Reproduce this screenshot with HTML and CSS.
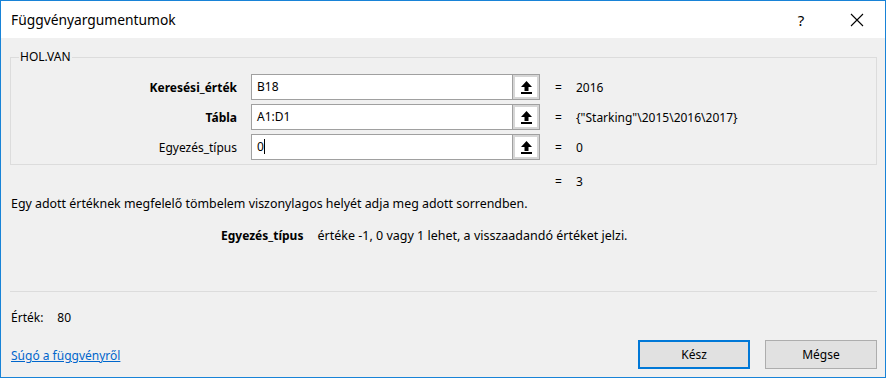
FILE: index.html
```html
<!DOCTYPE html>
<html>
<head>
<meta charset="utf-8" />
<title>Függvényargumentumok</title>
<link rel="stylesheet" href="styles.css">
</head>
<body>
<div class="dlg">
	<div class="titlebar">
		<span class="title">Függvényargumentumok</span>
		<span class="help">?</span>
		<span class="close">
			<svg width="14" height="14" viewBox="0 0 14 14"><path d="M1 1L13 13M13 1L1 13" stroke="#000" stroke-width="1.1" fill="none"/></svg>
		</span>
	</div>
	<div class="content">
		<fieldset class="group">
			<legend>HOL.VAN</legend>
			<div class="row">
				<label class="lbl bold">Keresési_érték</label>
				<div class="field">B18</div>
				<div class="pick"><i><svg width="11" height="13" viewBox="0 0 11 13"><path d="M5.5 0L11 6H7.5V10H3.5V6H0Z" fill="#000"/><rect x="0" y="11" width="11" height="2" fill="#000"/></svg></i></div>
				<span class="eq">=</span>
				<span class="val">2016</span>
			</div>
			<div class="row">
				<label class="lbl bold">Tábla</label>
				<div class="field">A1:D1</div>
				<div class="pick"><i><svg width="11" height="13" viewBox="0 0 11 13"><path d="M5.5 0L11 6H7.5V10H3.5V6H0Z" fill="#000"/><rect x="0" y="11" width="11" height="2" fill="#000"/></svg></i></div>
				<span class="eq">=</span>
				<span class="val">{"Starking"\2015\2016\2017}</span>
			</div>
			<div class="row">
				<label class="lbl">Egyezés_típus</label>
				<div class="field active">0<b class="caret"></b></div>
				<div class="pick"><i><svg width="11" height="13" viewBox="0 0 11 13"><path d="M5.5 0L11 6H7.5V10H3.5V6H0Z" fill="#000"/><rect x="0" y="11" width="11" height="2" fill="#000"/></svg></i></div>
				<span class="eq">=</span>
				<span class="val">0</span>
			</div>
		</fieldset>

		<div class="result"><span class="eq">=</span><span class="val">3</span></div>
		<p class="desc">Egy adott értéknek megfelelő tömbelem viszonylagos helyét adja meg adott sorrendben.</p>
		<p class="argdesc"><b>Egyezés_típus</b><span>értéke -1, 0 vagy 1 lehet, a visszaadandó értéket jelzi.</span></p>

		<div class="sep"></div>
		<p class="value">Érték:<span>80</span></p>

		<div class="footer">
			<a href="#" class="link">Súgó a függvényről</a>
			<div class="btns">
				<button class="btn primary">Kész</button>
				<button class="btn">Mégse</button>
			</div>
		</div>
	</div>
</div>
</body>
</html>
```

FILE: styles.css
```css
body,p,fieldset,legend{margin:0;padding:0;}
body{background:#fff;font-family:"Noto Sans","Open Sans",sans-serif;font-size:12px;color:#000;}
.dlg{width:886px;height:378px;box-sizing:border-box;border:1px solid #1883d7;background:#f0f0f0;display:flex;flex-direction:column;}
.titlebar{height:37px;background:#fff;display:flex;align-items:center;padding-left:10px;}
.title{font-size:13.8px;flex:1;}
.help{font-size:15px;width:30px;text-align:center;margin-right:34px;}
.close{width:14px;height:14px;margin-right:21px;display:flex;}
.content{flex:1;padding:0 8px 0 9px;display:flex;flex-direction:column;}

.group{border:1px solid #dcdcdc;margin-top:11px;height:114px;padding:0;}
legend{margin-left:8px;padding:0 1px;line-height:16px;}
.row{display:flex;align-items:center;height:26px;margin-bottom:4px;}
.row:first-of-type{margin-top:9px;}
.lbl{width:226px;text-align:right;margin-right:14px;}
.bold{font-weight:bold;}
.field{width:261px;height:26px;box-sizing:border-box;border:1px solid #a0a0a0;border-right:none;background:#fff;padding-left:5px;line-height:24px;position:relative;}
.caret{display:inline-block;width:1px;height:15px;background:#000;vertical-align:-3px;}
.pick{width:28px;height:26px;box-sizing:border-box;border:1px solid #a0a0a0;background:#d6d6d6;padding:2px;}
.pick i{display:flex;width:100%;height:100%;background:#fff;align-items:center;justify-content:center;}
.eq{width:21px;margin-left:15px;}
.val{white-space:nowrap;}

.result{display:flex;margin-top:8px;padding-left:530px;}
.result .eq{margin-left:15px;}
.desc{margin-top:5px;margin-left:1px;font-size:12.4px;}
.argdesc{margin-top:15px;padding-left:211px;}
.argdesc span{margin-left:14px;font-size:12.5px;}

.sep{height:1px;background:#dcdcdc;margin-top:47px;margin-right:0;}
.value{margin-top:17px;margin-left:1px;}
.value span{margin-left:14px;}

.footer{display:flex;align-items:flex-start;margin-top:14px;}
.link{color:#0066cc;margin-left:1px;margin-top:7px;flex:1;}
.btns{display:flex;gap:15px;}
.btn{width:112px;height:29px;box-sizing:border-box;border:1px solid #adadad;background:#e1e1e1;font-family:inherit;font-size:12px;color:#000;padding:0;}
.primary{border:2px solid #0078d7;}
```
